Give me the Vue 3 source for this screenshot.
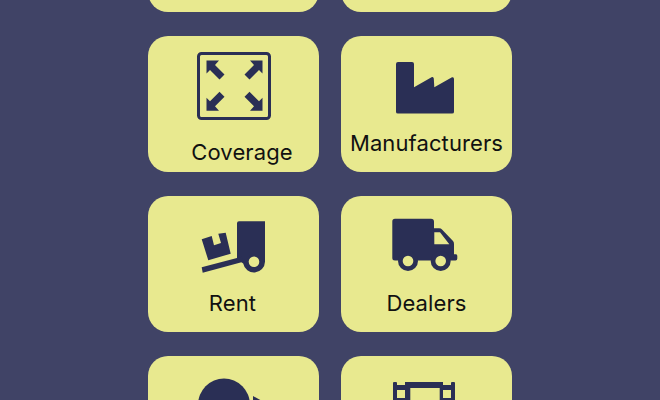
<template>
  <div class="page">
    <div class="grid">
      <div class="card"></div>
      <div class="card"></div>

      <div class="card">
        <svg class="icon icon-coverage" width="74" height="68" viewBox="0 0 74 68">
          <rect x="1.5" y="1.5" width="71" height="65" rx="3" fill="none" stroke="#2a2f55" stroke-width="3" />
          <path v-for="a in arrows" :key="a" :transform="a" fill="#2a2f55" d="M9.5 8.5H22L18 13 27.5 22.5 22.5 27.5 13 18 9.5 21.5Z" />
        </svg>
        <span class="label label-coverage">Coverage</span>
      </div>

      <div class="card">
        <svg class="icon icon-factory" width="58" height="52" viewBox="0 0 58 52">
          <path fill="#2a2f55" d="M2 0H16Q18 0 18 2V25.3L36 15Q37.5 14.5 37.8 16.5L38.3 25.3 56 15.3Q58 14.7 58 17V50Q58 51.5 56 51.5H2Q0 51.5 0 50V2Q0 0 2 0Z" />
        </svg>
        <span class="label">Manufacturers</span>
      </div>

      <div class="card">
        <svg class="icon icon-rent" width="66" height="54" viewBox="0 0 66 54">
          <path fill="#2a2f55" d="M39 1.3H65V41.7A11 11 0 0 1 43.2 43.5L37 39V3.3Q37 1.3 39 1.3Z" />
          <circle cx="54" cy="41.7" r="5.3" fill="#e8e98f" />
          <path fill="#2a2f55" d="M1.7 47.3L41.7 36.7 43.3 41.7 2.7 52.7Z" />
          <path fill="#2a2f55" d="M1.7 19.3L11.7 16 14 25.3 21 23 18.3 13.7 25.7 12.7 30.7 33.7 8.3 40.3Z" />
        </svg>
        <span class="label label-rent">Rent</span>
      </div>

      <div class="card">
        <svg class="icon icon-truck" width="66" height="54" viewBox="0 0 66 54">
          <path fill="#2a2f55" fill-rule="evenodd" d="M3 .7H39Q42 .7 42 3.7V10.3H47Q49 10.3 50 11.5L61 23Q62 24 62 26V36.3H64Q65.3 36.3 65.3 38V40.5Q65.3 42.5 63.5 42.5H3Q.3 42.5 .3 40V3.5Q.3 .7 3 .7ZM42.3 14.3V26.3H57.3L48 14.3Z" />
          <circle cx="16" cy="43" r="10" fill="#2a2f55" />
          <circle cx="48.7" cy="43" r="10" fill="#2a2f55" />
          <circle cx="16" cy="43" r="5.3" fill="#e8e98f" />
          <circle cx="48.7" cy="43" r="5.3" fill="#e8e98f" />
        </svg>
        <span class="label">Dealers</span>
      </div>

      <div class="card">
        <svg class="icon icon-horn" width="66" height="60" viewBox="0 0 66 60">
          <ellipse cx="26" cy="27" rx="26" ry="26.5" fill="#2a2f55" />
          <path fill="#2a2f55" d="M55 18L66 24V40L55 34Z" />
        </svg>
      </div>

      <div class="card">
        <svg class="icon icon-film" width="62" height="44" viewBox="0 0 62 44">
          <path fill="#2a2f55" fill-rule="evenodd" d="M0 1Q0 0 1 0H3Q4 0 4 1V3H12V0H50V3H58V1Q58 0 59 0H61Q62 0 62 1V44H0ZM4 8V16H12V8ZM50 8V16H58V8ZM17.3 6V44H46.7V6Z" />
        </svg>
      </div>
    </div>
  </div>
</template>

<script setup>
const c = [37.5, 33.6]
// the same arrow, mirrored into each corner of the frame
const arrows = [
  '',
  `translate(${c[0] * 2} 0) scale(-1 1)`,
  `translate(0 ${c[1] * 2}) scale(1 -1)`,
  `translate(${c[0] * 2} ${c[1] * 2}) scale(-1 -1)`,
]
</script>

<style>
html,
body {
  margin: 0;
  background: #404366;
}
</style>

<style scoped>
.page {
  height: 400px;
  overflow: hidden;
  background: #404366;
  font-family: Inter, "Liberation Sans", sans-serif;
}

.grid {
  display: grid;
  grid-template-columns: 171px 171px;
  grid-auto-rows: 136px;
  gap: 24px 22px;
  justify-content: center;
  margin-top: -124px;
}

.card {
  display: flex;
  flex-direction: column;
  align-items: center;
  background: #e8e98f;
  border-radius: 20px;
}

.icon {
  display: block;
  flex: none;
}

.label {
  margin-top: auto;
  margin-bottom: 15px;
  font-size: 22px;
  line-height: 28px;
  letter-spacing: 0.1px;
  color: #111;
}

.label-coverage {
  margin-bottom: 6px;
  margin-left: 17px;
}

.label-rent {
  margin-right: 2px;
}

.icon-coverage {
  margin-top: 16px;
}

.icon-factory {
  margin-top: 26px;
  margin-right: 3px;
}

.icon-rent {
  margin-top: 24px;
  margin-right: 2px;
}

.icon-truck {
  margin-top: 22px;
  margin-right: 3px;
}

.icon-horn {
  margin-top: 22px;
  margin-right: 5px;
}

.icon-film {
  margin-top: 26px;
  margin-right: 5px;
}
</style>
